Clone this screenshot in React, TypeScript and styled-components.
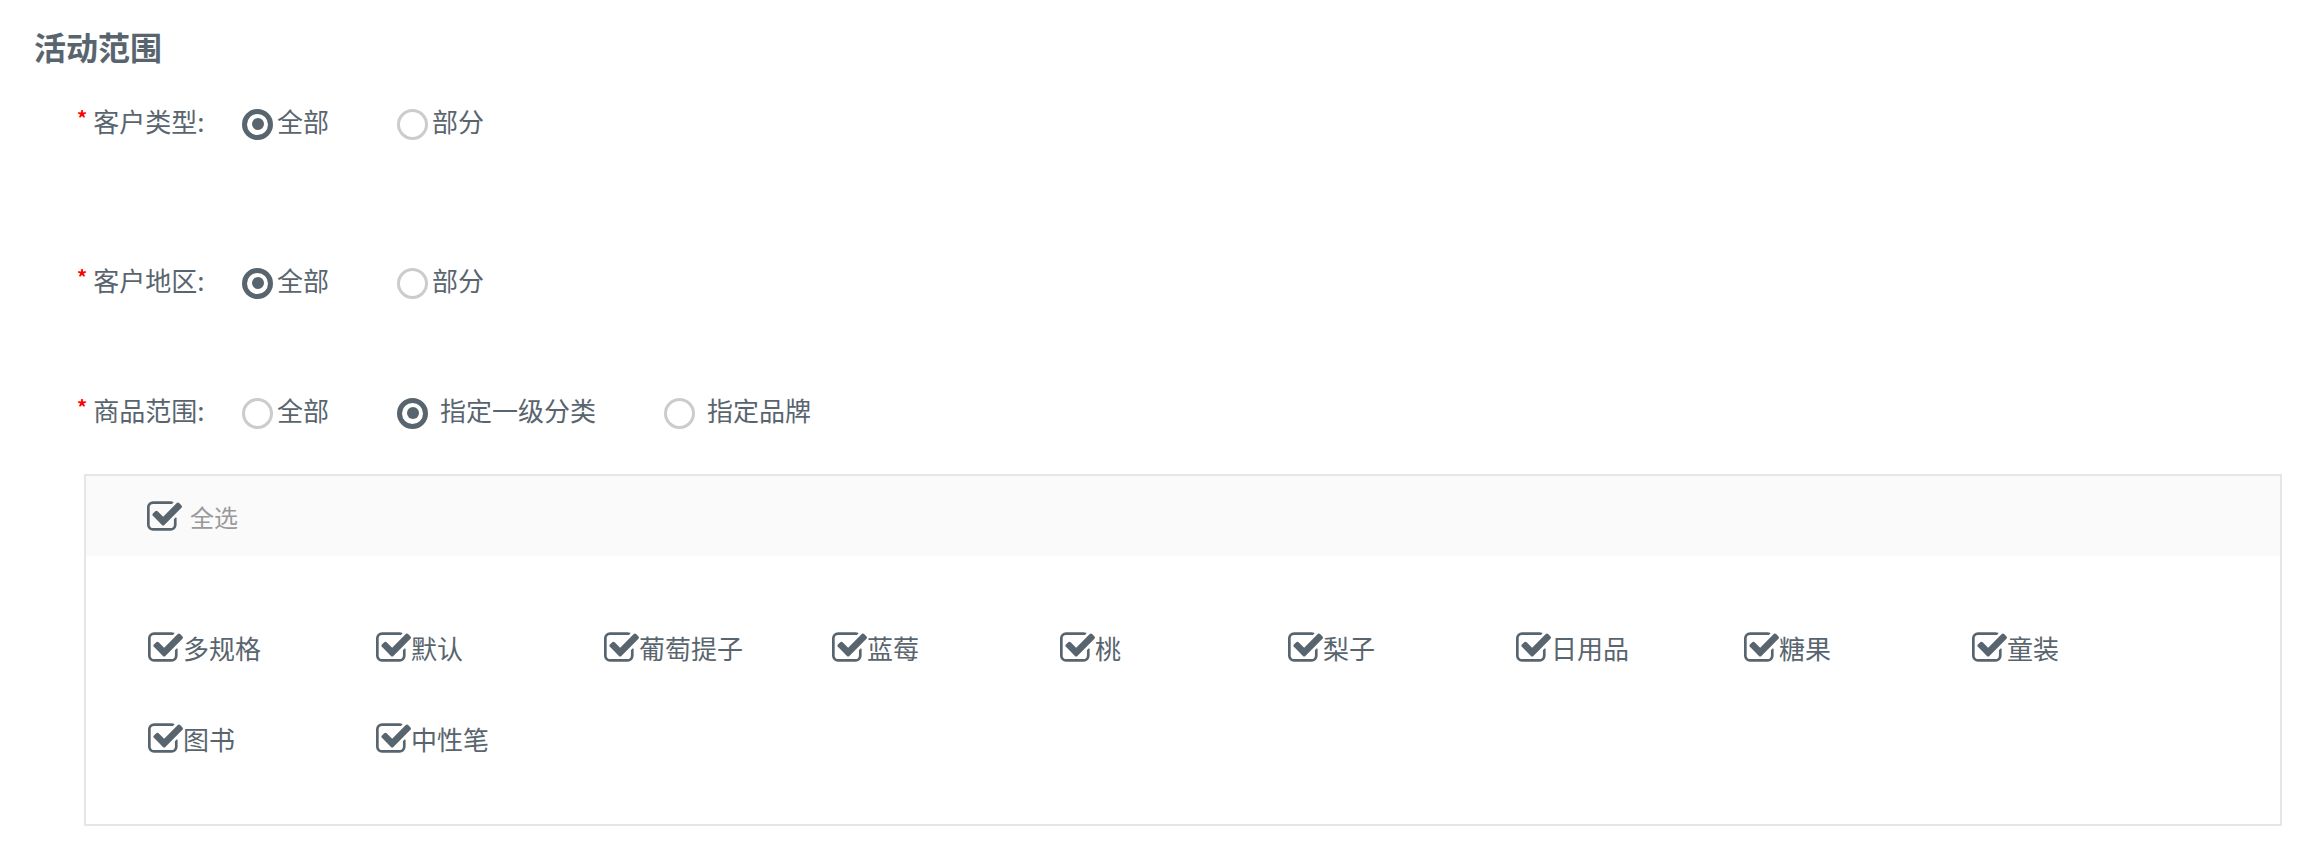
import styled, { createGlobalStyle } from "styled-components";

// palette taken from the screenshot
const textColor = "#59656e";
const mutedText = "#999999";
const lineColor = "#e6e6e6";
const bandColor = "#fafafa";
const requiredRed = "#ff0000";

const GlobalStyle = createGlobalStyle`
  body {
    margin: 0;
    background: #ffffff;
    font-family: "Noto Sans CJK SC", "Noto Sans", sans-serif;
    color: ${textColor};
  }
`;

const Page = styled.div`
  padding: 25px 42px 22px 34px;
`;

const SectionTitle = styled.h2`
  margin: 0;
  font-size: 32px;
  line-height: 42px;
  font-weight: 700;
  color: ${textColor};
`;

const FormRow = styled.div<{ $top: number }>`
  display: flex;
  align-items: center;
  height: 40px;
  margin-top: ${(p) => p.$top}px;
  padding-left: 43px;
`;

const FieldLabel = styled.label`
  display: flex;
  align-items: center;
  width: 165px;
  flex-shrink: 0;
  font-size: 26px;
  line-height: 40px;
`;

const Required = styled.span`
  color: ${requiredRed};
  font-size: 20px;
  font-weight: 700;
  margin-right: 6px;
  margin-top: -6px;
`;

const RadioGroup = styled.div`
  display: flex;
  align-items: center;
  gap: 68px;
`;

const RadioOption = styled.label`
  display: flex;
  align-items: center;
  font-size: 26px;
  line-height: 40px;
  cursor: pointer;
`;

const RadioDot = styled.span<{ $checked?: boolean }>`
  box-sizing: border-box;
  width: 31px;
  height: 31px;
  border-radius: 50%;
  margin-top: 6px;
  border: ${(p) => (p.$checked ? `5px solid ${textColor}` : "3px solid #cccccc")};
  display: flex;
  align-items: center;
  justify-content: center;
  &::after {
    content: "";
    width: 12px;
    height: 12px;
    border-radius: 50%;
    background: ${textColor};
    display: ${(p) => (p.$checked ? "block" : "none")};
  }
`;

const OptionText = styled.span<{ $spaced?: boolean }>`
  margin-left: ${(p) => (p.$spaced ? 12 : 4)}px;
`;

const Panel = styled.div`
  margin: 44px 0 0 50px;
  border: 2px solid ${lineColor};
`;

const PanelHead = styled.div`
  display: flex;
  align-items: center;
  height: 80px;
  padding-left: 61px;
  background: ${bandColor};
`;

const PanelBody = styled.div`
  display: flex;
  flex-wrap: wrap;
  row-gap: 51px;
  padding: 71px 0 66px 62px;
`;

const CheckItem = styled.label<{ $muted?: boolean }>`
  display: flex;
  align-items: center;
  width: 228px;
  height: 40px;
  font-size: ${(p) => (p.$muted ? 24 : 26)}px;
  color: ${(p) => (p.$muted ? mutedText : textColor)};
  cursor: pointer;
`;

const CheckGap = styled.span<{ $wide?: boolean }>`
  display: inline-block;
  width: ${(p) => (p.$wide ? 8 : 0)}px;
`;

const CheckIcon = () => (
  <svg width="35" height="30" viewBox="0 128 1664 1408" fill={textColor} style={{ flexShrink: 0 }}>
    <path d="M1408 930v318q0 119-84.5 203.5T1120 1536H288q-119 0-203.5-84.5T0 1248V416q0-119 84.5-203.5T288 128h832q63 0 117 25 15 7 18 23 3 17-9 29l-49 49q-10 10-23 10-3 0-9-2-23-6-45-6H288q-66 0-113 47t-47 113v832q0 66 47 113t113 47h832q66 0 113-47t47-113V994q0-13 9-22l64-64q10-10 23-10 6 0 12 3 20 8 20 29zm231-489l-814 814q-24 24-57 24t-57-24L281 825q-24-24-24-57t24-57l110-110q24-24 57-24t57 24l263 263 647-647q24-24 57-24t57 24l110 110q24 24 24 57t-24 57z" />
  </svg>
);

type Option = { text: string; checked?: boolean; spaced?: boolean };
type Field = { label: string; top: number; options: Option[] };

const fields: Field[] = [
  { label: "客户类型:", top: 34, options: [{ text: "全部", checked: true }, { text: "部分" }] },
  { label: "客户地区:", top: 119, options: [{ text: "全部", checked: true }, { text: "部分" }] },
  {
    label: "商品范围:",
    top: 90,
    options: [
      { text: "全部" },
      { text: "指定一级分类", checked: true, spaced: true },
      { text: "指定品牌", spaced: true },
    ],
  },
];

const categories = ["多规格", "默认", "葡萄提子", "蓝莓", "桃", "梨子", "日用品", "糖果", "童装", "图书", "中性笔"];

function App() {
  return (
    <Page>
      <GlobalStyle />
      <SectionTitle>活动范围</SectionTitle>

      {fields.map((f) => (
        <FormRow key={f.label} $top={f.top}>
          <FieldLabel>
            <Required>*</Required>
            {f.label}
          </FieldLabel>
          <RadioGroup>
            {f.options.map((o) => (
              <RadioOption key={o.text}>
                <RadioDot $checked={o.checked} />
                <OptionText $spaced={o.spaced}>{o.text}</OptionText>
              </RadioOption>
            ))}
          </RadioGroup>
        </FormRow>
      ))}

      <Panel>
        <PanelHead>
          <CheckItem $muted>
            <CheckIcon />
            <CheckGap $wide />
            全选
          </CheckItem>
        </PanelHead>
        <PanelBody>
          {categories.map((c) => (
            <CheckItem key={c}>
              <CheckIcon />
              <CheckGap />
              {c}
            </CheckItem>
          ))}
        </PanelBody>
      </Panel>
    </Page>
  );
}

export default App;
